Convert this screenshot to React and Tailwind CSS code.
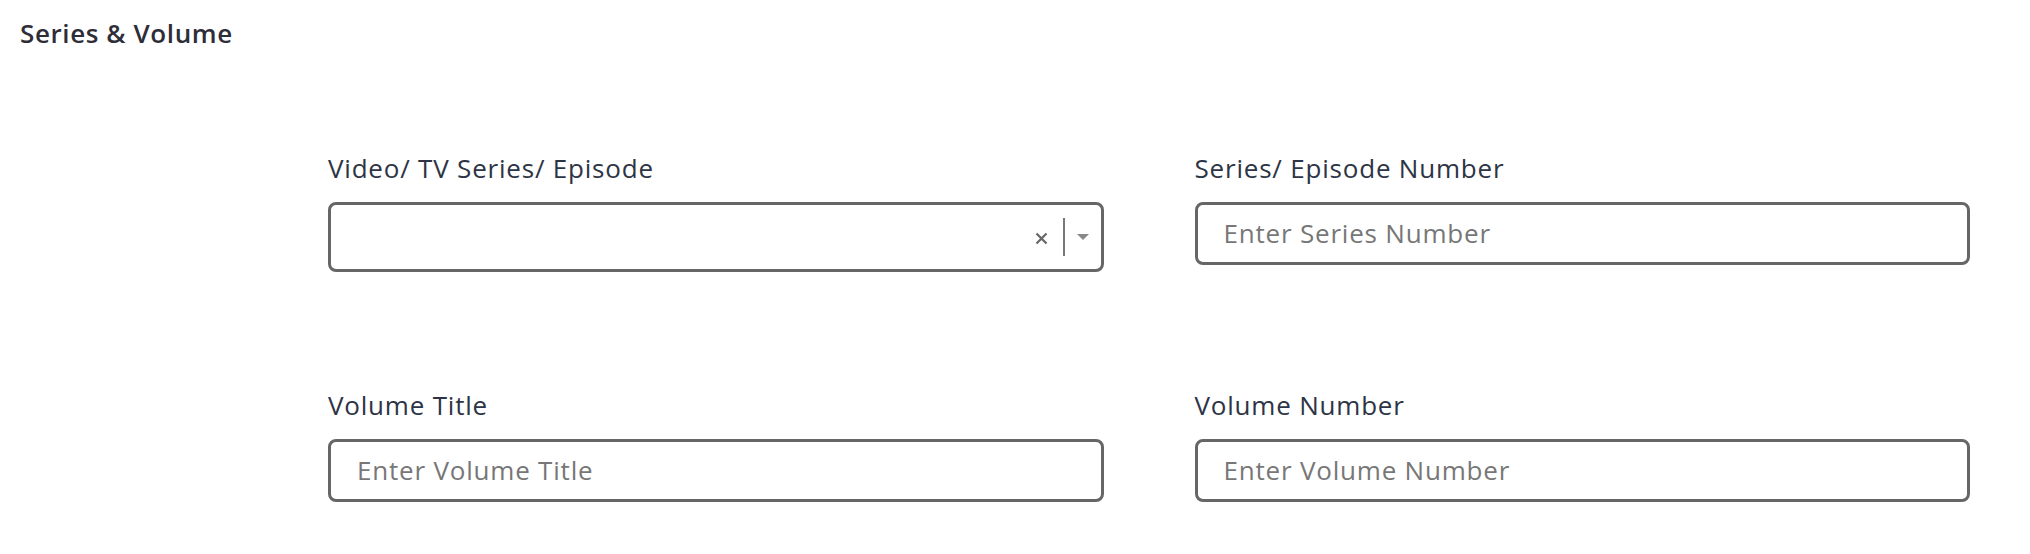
import React from 'react';

const Field = ({ label, placeholder }) => (
  <div className="flex flex-col">
    <label className="text-[26px] leading-[32px] font-medium tracking-[0.8px] text-[#2d3445] mb-[18px]">{label}</label>
    <input
      type="text"
      placeholder={placeholder}
      className="h-[63px] w-full rounded-[8px] border-[3px] border-[#666] bg-white pl-[26px] pb-[2px] text-[26px] tracking-[0.8px] text-[#333] outline-none placeholder:text-[#777]"
    />
  </div>
);

const SelectField = ({ label }) => (
  <div className="flex flex-col">
    <label className="text-[26px] leading-[32px] font-medium tracking-[0.8px] text-[#2d3445] mb-[18px]">{label}</label>
    <div className="h-[70px] w-full rounded-[8px] border-[3px] border-[#666] bg-white flex items-center justify-end">
      <svg width="13" height="13" viewBox="0 0 13 13" className="mr-[15px] mt-[2px]">
        <path d="M1.5 1.5 L11.5 11.5 M11.5 1.5 L1.5 11.5" stroke="#666" strokeWidth="2.2" />
      </svg>
      <span className="w-[2px] h-[38px] bg-[#777]"></span>
      <svg width="12" height="7" viewBox="0 0 12 7" className="ml-[12px] mr-[12px]">
        <path d="M0 0 L12 0 L6 6 Z" fill="#888" />
      </svg>
    </div>
  </div>
);

export default function App() {
  return (
    <div className="w-[2030px] h-[554px] bg-white" style={{ fontFamily: '"Open Sans", sans-serif' }}>
      <div className="pt-[17px] pl-[20px]">
        <h2 className="text-[26px] leading-[32px] font-semibold tracking-[0.6px] text-[#2e2e38]">Series &amp; Volume</h2>
      </div>
      <div className="mt-[103px] pl-[328px] pr-[60px] grid grid-cols-2 gap-x-[91px] gap-y-[117px] items-start">
        <SelectField label="Video/ TV Series/ Episode" />
        <Field label="Series/ Episode Number" placeholder="Enter Series Number" />
        <Field label="Volume Title" placeholder="Enter Volume Title" />
        <Field label="Volume Number" placeholder="Enter Volume Number" />
      </div>
    </div>
  );
}
